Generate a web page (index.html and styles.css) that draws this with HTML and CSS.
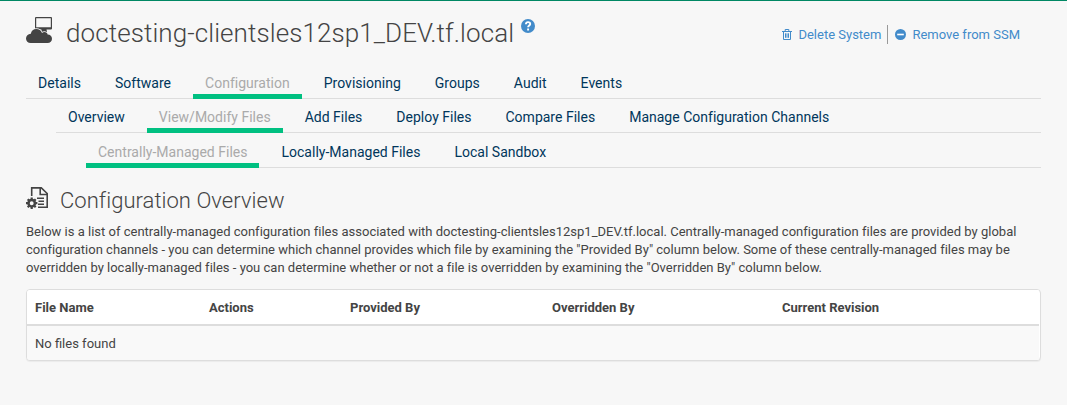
FILE: index.html
```html
<!DOCTYPE html>
<html lang="en">
<head>
<meta charset="utf-8">
<title>Configuration Overview</title>
<link rel="stylesheet" href="styles.css">
</head>
<body>
<main class="page">
  <header class="system-header">
    <svg class="system-icon" viewBox="0 0 26 26" aria-hidden="true">
      <path fill="currentColor" fill-rule="evenodd" d="M10 0h15q1 0 1 1v10.500q0 1-1 1H20.500l.5 2.500h-6l.5-2.500H10q-1 0-1-1V1q0-1 1-1zM10.200 1.200v9h14.600v-9z"/>
      <path class="cloud" d="M4.700 26C1.900 26 0 24 0 21.500C0 19 2 17 4.800 16.800C5.300 13.700 7.500 12 10.300 12C13 12 15.200 13.500 16 16C18 14.300 21.500 15.200 21.600 17.600C24.200 17.600 26 19.400 26 21.800C26 24.200 24.200 26 21.500 26z"/>
    </svg>
    <h1 class="system-name">doctesting-clientsles12sp1_DEV.tf.local</h1>
    <svg class="help-icon" viewBox="0 0 14 14" aria-label="Help">
      <circle cx="7" cy="7" r="7" fill="currentColor"/>
      <path d="M4.900 5.200C5 3.500 6 3.100 7 3.100c1.200 0 2.200.7 2.200 1.800C9.200 6.500 7.100 6.500 7.100 8.300M7.100 9.400v2" fill="none" stroke="#fff" stroke-width="1.900"/>
    </svg>
    <div class="actions">
      <a class="action"><svg class="trash-icon" viewBox="0 0 10 11" aria-hidden="true"><path d="M0 2.500h10M3.200 2.300V.5h3.600v1.800M1.500 2.500v8h7v-8M3.500 4.300v4.500M5 4.300v4.500M6.500 4.300v4.500" fill="none" stroke="currentColor"/></svg><span>Delete System</span></a>
      <a class="action action-divided"><svg class="minus-icon" viewBox="0 0 11 11" aria-hidden="true"><circle cx="5.500" cy="5.500" r="5.500" fill="currentColor"/><path d="M2.200 5.500h6.600" stroke="#fff" stroke-width="1.600"/></svg><span>Remove from SSM</span></a>
    </div>
  </header>

  <nav class="tabs tabs-primary">
    <a class="tab">Details</a><a class="tab">Software</a><a class="tab active">Configuration</a><a class="tab">Provisioning</a><a class="tab">Groups</a><a class="tab">Audit</a><a class="tab">Events</a>
  </nav>
  <nav class="tabs tabs-secondary">
    <a class="tab">Overview</a><a class="tab active">View/Modify Files</a><a class="tab">Add Files</a><a class="tab">Deploy Files</a><a class="tab">Compare Files</a><a class="tab">Manage Configuration Channels</a>
  </nav>
  <nav class="tabs tabs-tertiary">
    <a class="tab active">Centrally-Managed Files</a><a class="tab">Locally-Managed Files</a><a class="tab">Local Sandbox</a>
  </nav>

  <div class="section-heading">
    <svg class="config-icon" viewBox="0 0 22 22" aria-hidden="true">
      <path d="M5.700 9V.900h9.600L21.200 6.500v13.800H12M14.200 1v6.500h7M11 11.300h7M12.500 14.300H18M12 17.300h6" fill="none" stroke="currentColor" stroke-width="1.600"/>
      <circle cx="5.700" cy="16.200" r="3.200" fill="none" stroke="currentColor" stroke-width="2.500"/>
      <path d="M5.700 10.500v2.500M5.700 19.400v2.500M0 16.200h2.400M9 16.200h2.400M1.700 12.200l1.700 1.700M8 18.500l1.700 1.700M9.700 12.200L8 13.900M3.400 18.500L1.700 20.200" stroke="currentColor" stroke-width="2.200"/>
    </svg>
    <h2 class="section-title">Configuration Overview</h2>
  </div>
  <p class="description">Below is a list of centrally-managed configuration files associated with doctesting-clientsles12sp1_DEV.tf.local. Centrally-managed configuration files are provided by global configuration channels - you can determine which channel provides which file by examining the "Provided By" column below. Some of these centrally-managed files may be overridden by locally-managed files - you can determine whether or not a file is overridden by examining the "Overridden By" column below.</p>

  <div class="panel">
    <table class="files">
      <colgroup><col class="col-name"><col class="col-actions"><col class="col-provided"><col class="col-overridden"><col></colgroup>
      <thead><tr><th>File Name</th><th>Actions</th><th>Provided By</th><th>Overridden By</th><th>Current Revision</th></tr></thead>
      <tbody><tr><td colspan="5">No files found</td></tr></tbody>
    </table>
  </div>
</main>
</body>
</html>
```
FILE: styles.css
```css
* { box-sizing: border-box; }
body {
  margin: 0;
  min-height: 405px;
  background: #f7f7f7;
  border-top: 1px solid #008864;
  color: #444;
  font: 13px/18px Roboto, "Liberation Sans", sans-serif;
}
.page { padding: 0 26px; }
.system-header { display: flex; align-items: flex-start; height: 71px; }
.system-icon { flex: none; width: 26px; height: 26px; margin-top: 16px; }
.cloud { fill: currentColor; stroke: #f7f7f7; stroke-width: 1.6; paint-order: stroke; }
.system-name { margin: 15px 0 0 14px; font-size: 26px; line-height: 34px; font-weight: 300; letter-spacing: .085px; }
.help-icon { flex: none; width: 14px; height: 14px; margin: 18px 0 0 7px; color: #428bca; }
.actions { display: flex; margin: 24px 21px 0 auto; color: #428bca; }
.action { display: flex; align-items: center; height: 19px; }
.action-divided { margin-left: 6px; padding-left: 7px; border-left: 1px solid #999; }
.trash-icon { width: 10px; height: 11px; margin-right: 6px; }
.minus-icon { width: 11px; height: 11px; margin-right: 6px; }
.tabs {
  display: flex;
  gap: 10px;
  border-bottom: 1px solid #ddd;
  font-size: 14px;
  line-height: 20px;
}
.tabs-primary { height: 27px; letter-spacing: .018px; }
.tabs-secondary { height: 34px; margin-left: 30px; padding-top: 7px; letter-spacing: .008px; }
.tabs-tertiary { height: 35px; margin-left: 60px; padding-top: 8px; letter-spacing: .008px; }
.tab {
  height: 27px;
  padding: 1px 12px 0;
  border-bottom: 5px solid transparent;
  color: #00365b;
  white-space: nowrap;
}
.tab.active { color: #aaa; border-bottom-color: #00c081; }
.section-heading { display: flex; height: 55px; padding-top: 19px; }
.config-icon { width: 22px; height: 22px; }
.section-title { margin: -1px 0 0 12px; font-size: 22px; line-height: 30px; font-weight: 300; letter-spacing: .04px; }
.description { margin: 0; letter-spacing: .005px; }
.panel {
  margin-top: 12px;
  padding-right: 1px;
  border: 1px solid #ddd;
  border-radius: 4px;
  background: #fff;
  box-shadow: 0 1px 1px rgba(0, 0, 0, .05);
  overflow: hidden;
}
.files { width: 100%; border-collapse: separate; border-spacing: 0; table-layout: fixed; }
.col-name { width: 174px; }
.col-actions { width: 141px; }
.col-provided { width: 202px; }
.col-overridden { width: 230px; }
.files th, .files td { padding: 2px 8px 0; text-align: left; }
.files th { height: 36px; background: #fff; border-bottom: 2px solid #ddd; font-weight: 700; }
.files td { height: 34px; background: #f9f9f9; }
```
